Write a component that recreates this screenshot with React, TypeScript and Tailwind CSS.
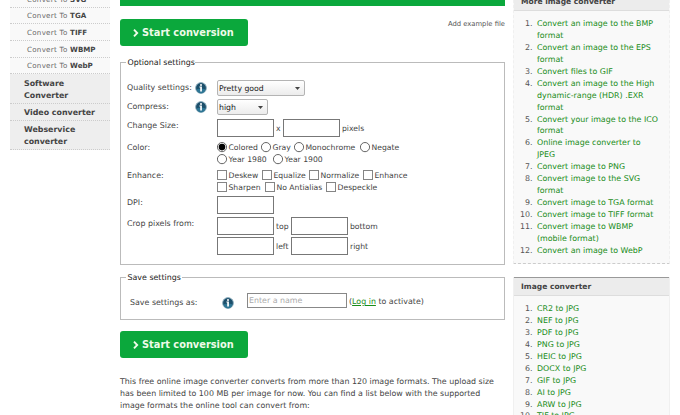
import React from 'react';

const formats: [string, string][] = [
  ['SVG', 'h-[8px]'],
  ['TGA', 'h-[16px]'],
  ['TIFF', 'h-[17px]'],
  ['WBMP', 'h-[17px]'],
  ['WebP', 'h-[16px]'],
];

const imageConverters = [
  ['Convert an image to the BMP', 'format'],
  ['Convert an image to the EPS', 'format'],
  ['Convert files to GIF'],
  ['Convert an image to the High', 'dynamic-range (HDR) .EXR', 'format'],
  ['Convert your image to the ICO', 'format'],
  ['Online image converter to', 'JPEG'],
  ['Convert image to PNG'],
  ['Convert image to the SVG', 'format'],
  ['Convert image to TGA format'],
  ['Convert image to TIFF format'],
  ['Convert image to WBMP', '(mobile format)'],
  ['Convert an image to WebP'],
];

const jpgConverters = ['CR2', 'NEF', 'PDF', 'PNG', 'HEIC', 'DOCX', 'GIF', 'AI', 'ARW', 'TIF'].map((n) => [
  `${n} to JPG`,
]);

function StartButton() {
  return (
    <button className="flex h-[27px] w-32 shrink-0 items-center rounded-[3px] bg-[#0ba83c] pl-[13px] text-[9.82px] font-bold text-[#effbe9]">
      <svg className="mt-px mr-[3px] h-[8px] w-[6px]" viewBox="0 0 6 8" fill="none" stroke="currentColor" strokeWidth="1.9">
        <path d="M1 .7 4.2 4 1 7.3" />
      </svg>
      Start conversion
    </button>
  );
}

function Info() {
  return (
    <svg className="size-3 shrink-0" viewBox="0 0 12 12">
      <circle cx="6" cy="6" r="5.4" fill="#1c4f6b" stroke="#8fb0c0" strokeWidth=".9" />
      <path d="M1.5 7.5a4.6 4.6 0 0 0 9 0Q6 5.5 1.5 7.5Z" fill="#2d7695" />
      <circle cx="6" cy="3" r="1" fill="#fff" />
      <path d="M4.4 4.5h2.5v5H5.2V5.5h-.8z" fill="#fff" />
    </svg>
  );
}

function Select({ label, className }: { label: string; className: string }) {
  return (
    <div
      className={`flex h-4 items-center justify-between rounded-[2px] border border-[#b4b4b4] bg-gradient-to-b from-white to-[#ececec] pr-[4px] pl-[1px] text-[7.75px] text-[#222] ${className}`}
    >
      <span className="pt-[2px]">{label}</span>
      <svg className="h-[3px] w-[5px]" viewBox="0 0 5 3">
        <path d="M0 0h5L2.5 3z" fill="#444" />
      </svg>
    </div>
  );
}

function Box() {
  return <input className="block h-[18px] w-[57px] border border-[#777] bg-white" />;
}

function Radio({ label, on, className = '' }: { label: string; on?: boolean; className?: string }) {
  return (
    <label className={`flex h-3 items-center ${className}`}>
      <svg className="mr-[0.5px] size-[11px] shrink-0" viewBox="0 0 11 11">
        <circle cx="5" cy="5.1" r="4.6" fill="#fff" stroke="#555" strokeWidth=".9" />
        {on && <circle cx="5" cy="5.1" r="3.3" fill="#000" />}
      </svg>
      <span className="mt-[2px]">{label}</span>
    </label>
  );
}

function Check({ label, className = '' }: { label: string; className?: string }) {
  return (
    <label className={`flex h-3 items-center ${className}`}>
      <span className="mr-[1.5px] size-[10px] shrink-0 border border-[#858585] bg-white" />
      <span className="mt-[2px]">{label}</span>
    </label>
  );
}

function Row({ label, info, className, children }: { label: string; info?: boolean; className: string; children: React.ReactNode }) {
  return (
    <div className={`flex text-[7.68px] ${className}`}>
      <div className="mt-px h-3 w-[68px] shrink-0 text-[7.9px]">{label}</div>
      <div className="mt-px w-[22px] shrink-0">{info && <Info />}</div>
      {children}
    </div>
  );
}

function Links({ items }: { items: string[][] }) {
  return (
    <ol className="leading-[11.94px]">
      {items.map((lines, i) => (
        <li key={lines[0]} className="flex">
          <span className="w-[18.5px] shrink-0 text-right text-[#555]">{i + 1}.</span>
          <a className="ml-[4.5px] text-[#188c18]">
            {lines.map((line) => (
              <span key={line} className="block">
                {line}
              </span>
            ))}
          </a>
        </li>
      ))}
    </ol>
  );
}

export default function App() {
  return (
    <div className="flex h-[415px] w-[680px] overflow-hidden bg-white font-['DejaVu_Sans',sans-serif] text-[7.9px] leading-3 whitespace-nowrap text-[#444]">
      <nav className="ml-[10px] h-[150px] w-[100px] shrink-0 bg-[#f9f9f9]">
        {formats.map(([name, height]) => (
          <div key={name} className={`flex items-end border-b border-dotted border-[#ccc] pb-[1px] pl-[17px] text-[7.1px] tracking-[0.28px] text-[#666] ${height}`}>
            Convert To&nbsp;<b className="tracking-[-0.05px] text-[#444]">{name}</b>
          </div>
        ))}
        <div className="bg-[#eee] font-bold">
          <div className="h-[30px] border-b border-dotted border-[#ccc] pt-[4px] pl-[14px]">Software<br />Converter</div>
          <div className="h-[17px] border-b border-dotted border-[#ccc] pt-[3px] pl-[14px]">Video converter</div>
          <div className="h-[29px] border-b border-dotted border-[#ccc] pt-[3px] pl-[14px]">Webservice<br />converter</div>
        </div>
      </nav>

      <main className="ml-[10px] w-[385px] shrink-0">
        <div className="h-[6px] bg-[#0ba83c]" />
        <div className="mt-[13px] flex items-start justify-between">
          <StartButton />
          <a className="-mt-px text-[6.8px] text-[#555]">Add example file</a>
        </div>

        <section className="mt-[16px] h-[203px] border border-[#bbb] pl-[6px]">
          <h2 className="-mt-[6px] -ml-px h-[11px] w-[69px] bg-white pl-[1.5px] text-[#222]">Optional settings</h2>
          <Row label="Quality settings:" info className="mt-[13px] h-[19px]">
            <Select label="Pretty good" className="-mt-px w-[88px]" />
          </Row>
          <Row label="Compress:" info className="h-[19px]">
            <Select label="high" className="-mt-px w-[51px]" />
          </Row>
          <Row label="Change Size:" className="h-[22px]">
            <Box />
            <span className="mt-[4px] ml-[2px] w-[7px]">x</span>
            <Box />
            <span className="mt-[4px] ml-[2px]">pixels</span>
          </Row>
          <Row label="Color:" className="h-[28px]">
            <div>
              <div className="flex">
                <Radio label="Colored" on className="w-[44px]" />
                <Radio label="Gray" className="w-[33px]" />
                <Radio label="Monochrome" className="w-[66px]" />
                <Radio label="Negate" />
              </div>
              <div className="flex">
                <Radio label="Year 1980" className="w-[56px]" />
                <Radio label="Year 1900" />
              </div>
            </div>
          </Row>
          <Row label="Enhance:" className="h-[27px]">
            <div>
              <div className="flex">
                <Check label="Deskew" className="w-[45px]" />
                <Check label="Equalize" className="w-[47px]" />
                <Check label="Normalize" className="w-[54px]" />
                <Check label="Enhance" />
              </div>
              <div className="flex">
                <Check label="Sharpen" className="w-[48px]" />
                <Check label="No Antialias" className="w-[61px]" />
                <Check label="Despeckle" />
              </div>
            </div>
          </Row>
          <Row label="DPI:" className="h-[21px]">
            <Box />
          </Row>
          <Row label="Crop pixels from:" className="h-[20px]">
            <Box />
            <span className="mt-[4px] ml-[2px] w-[15px]">top</span>
            <Box />
            <span className="mt-[4px] ml-[2px]">bottom</span>
          </Row>
          <Row label="" className="h-[20px]">
            <Box />
            <span className="mt-[4px] ml-[2px] w-[15px]">left</span>
            <Box />
            <span className="mt-[4px] ml-[2px]">right</span>
          </Row>
        </section>

        <section className="mt-[12px] h-[43px] border border-[#bbb] pl-[6px]">
          <h2 className="-mt-[6px] -ml-px h-[11px] w-[56px] bg-white pl-[1.5px] text-[#222]">Save settings</h2>
          <div className="mt-[10px] flex">
            <span className="mt-[4px] ml-[3px] w-[92px]">Save settings as:</span>
            <span className="mt-[4px] w-[25px]"><Info /></span>
            <input className="h-[15px] w-[100px] border border-[#888] pl-[1px] placeholder:text-[#aaa]" placeholder="Enter a name" />
            <span className="mt-[3px] ml-[2px]">
              (<a className="text-[#188c18] underline">Log in</a> to activate)
            </span>
          </div>
        </section>

        <div className="mt-[11px]">
          <StartButton />
        </div>
        <p className="mt-[18px] h-10">
          This free online image converter converts from more than 120 image formats. The upload size<br />
          has been limited to 100 MB per image for now. You can find a list below with the supported<br />
          image formats the online tool can convert from:
        </p>
      </main>

      <aside className="ml-[8px] w-[157px] shrink-0">
        <section className="h-[264px] border-x border-b border-dashed border-x-[#f0f0f0] border-b-[#ccc] bg-[#f9f9f9]">
          <h3 className="flow-root h-[11px] border-b border-[#ddd] bg-[#ececec] pl-[7px] text-[7.55px] font-bold"><span className="-mt-[4px] block">More image converter</span></h3>
          <div className="pt-[7px]"><Links items={imageConverters} /></div>
        </section>
        <section className="mt-[13px] h-[150px] border-x border-x-[#f0f0f0] bg-[#f9f9f9]">
          <h3 className="h-[19px] border-t border-b border-t-[#999] border-b-[#ddd] bg-[#ececec] pt-[3px] pl-[7px] text-[7.55px] font-bold">Image converter</h3>
          <div className="pt-[7px]"><Links items={jpgConverters} /></div>
        </section>
      </aside>
    </div>
  );
}
